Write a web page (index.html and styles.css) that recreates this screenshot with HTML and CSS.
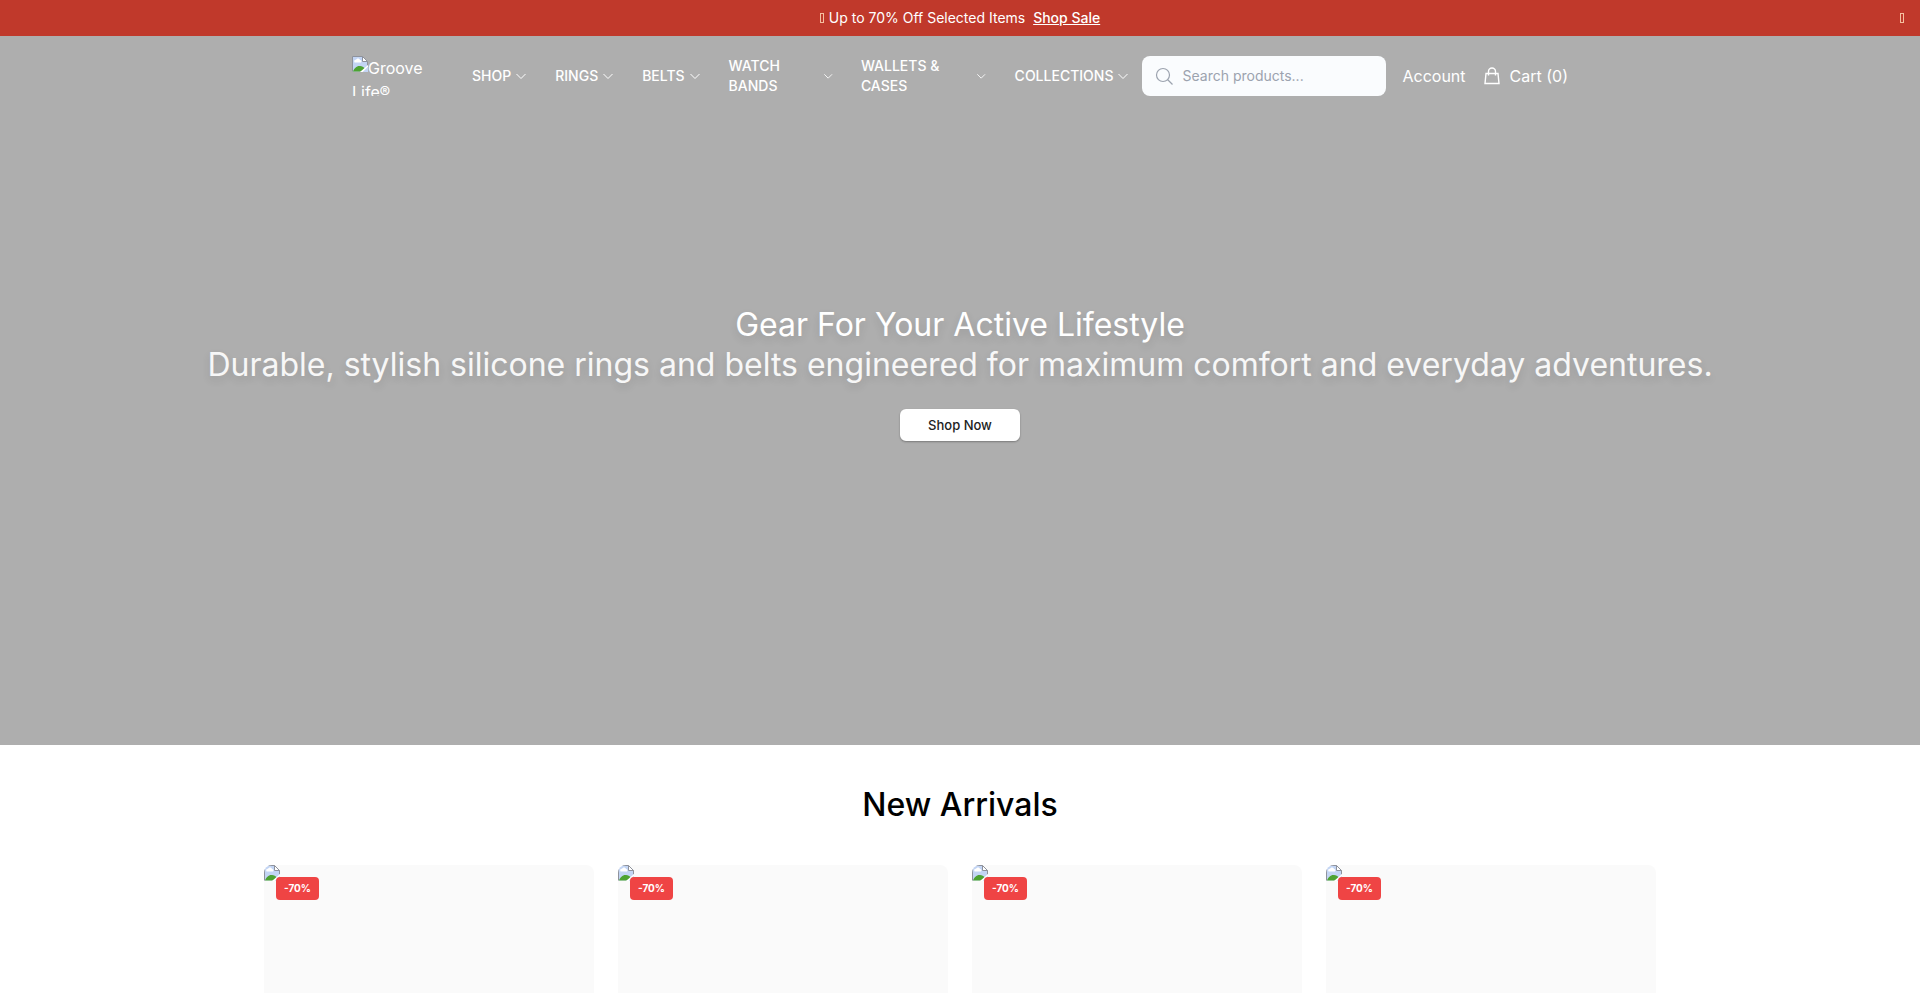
FILE: index.html
```html
<!DOCTYPE html>
<html lang="en">
<head>
    <meta charset="UTF-8">
    <meta name="viewport" content="width=device-width, initial-scale=1.0">
    <title>Groove Life®</title>
    <link rel="stylesheet" href="styles.css">
</head>
<body>
    <!-- Shared icons -->
    <svg class="sprite" aria-hidden="true">
        <symbol id="chevron" viewBox="0 0 24 24">
            <path d="M3 8l9 9 9-9" fill="none" stroke="currentColor" stroke-width="2"/>
        </symbol>
        <symbol id="picture" viewBox="0 0 16 16">
            <path d="M.5 .5h10l5 5v10H.5z" fill="#c3d5f4"/>
            <path d="M2.500 6.500c-1-2 .5-3 1.500-2.500.5-2 3.500-2 4 0 1.500 0 2 1.500 1 2.500z" fill="#fff"/>
            <path d="M1 15.500c1-3 4-6 7-5.500 2 0 3.500 1 5 2.500l-4 3z" fill="#4da332"/>
            <path d="M.5 15.500V.5h10l5 5v4" fill="none" stroke="#8e929c"/>
            <path d="M10.500 .5v5h5z" fill="#fff" stroke="#8e929c"/>
            <path d="M8 16l8-7v2l-5 5z" fill="#fff"/>
            <path d="M11 16l5-5v5z" fill="#c3d5f4"/>
        </symbol>
    </svg>

    <!-- Sale banner -->
    <div class="banner">
        <p class="banner-text"><span class="glyph"></span>Up to 70% Off Selected Items <a href="#">Shop Sale</a></p>
        <button type="button" class="banner-close" aria-label="Close"><span class="glyph"></span></button>
    </div>

    <!-- Hero -->
    <div class="hero">
        <header class="header">
            <a href="#" class="logo"><svg class="picture"><use href="#picture"/></svg>Groove Life®</a>
            <nav class="nav">
                <button type="button" class="nav-item"><span>SHOP</span><svg><use href="#chevron"/></svg></button>
                <button type="button" class="nav-item"><span>RINGS</span><svg><use href="#chevron"/></svg></button>
                <button type="button" class="nav-item"><span>BELTS</span><svg><use href="#chevron"/></svg></button>
                <button type="button" class="nav-item"><span>WATCH BANDS</span><svg><use href="#chevron"/></svg></button>
                <button type="button" class="nav-item"><span>WALLETS &amp; CASES</span><svg><use href="#chevron"/></svg></button>
                <button type="button" class="nav-item"><span>COLLECTIONS</span><svg><use href="#chevron"/></svg></button>
            </nav>
            <label class="search">
                <svg viewBox="0 0 20 20" fill="none" stroke="currentColor" stroke-width="1.200"><circle cx="9" cy="9" r="6.500"/><path d="M13.500 13.500l5 5"/></svg>
                <input type="text" placeholder="Search products..." aria-label="Search products">
            </label>
            <a href="#" class="account">Account</a>
            <a href="#" class="cart">
                <svg viewBox="0 0 20 20" fill="none" stroke="currentColor" stroke-width="1.400"><path d="M4 7.500h12l1 10H3z"/><path d="M6.500 9.500V5.500a3.500 3.500 0 0 1 7 0v4"/></svg>
                <span>Cart (0)</span>
            </a>
        </header>

        <div class="hero-content">
            <h1>Gear For Your Active Lifestyle</h1>
            <p>Durable, stylish silicone rings and belts engineered for maximum comfort and everyday adventures.</p>
            <button type="button" class="shop-now">Shop Now</button>
        </div>
    </div>

    <!-- New arrivals -->
    <section class="arrivals">
        <h2>New Arrivals</h2>
        <div class="products">
            <div class="product"><svg class="picture"><use href="#picture"/></svg><span class="discount">-70%</span></div>
            <div class="product"><svg class="picture"><use href="#picture"/></svg><span class="discount">-70%</span></div>
            <div class="product"><svg class="picture"><use href="#picture"/></svg><span class="discount">-70%</span></div>
            <div class="product"><svg class="picture"><use href="#picture"/></svg><span class="discount">-70%</span></div>
        </div>
    </section>
</body>
</html>
```
FILE: styles.css
```css
* {
    box-sizing: border-box;
}
html {
    scrollbar-width: none;
}
body {
    margin: 0;
    font-family: Inter, sans-serif;
    font-size: 16px;
    line-height: 24px;
    color: #000;
    background-color: #fff;
}
h1, h2, p {
    margin: 0;
}
a {
    color: inherit;
    text-decoration: none;
}
button {
    padding: 0;
    border: none;
    background: none;
    color: inherit;
    font-family: inherit;
    cursor: pointer;
}
.sprite {
    display: none;
}
.picture {
    width: 16px;
    height: 16px;
}

/* Sale banner */
.banner {
    position: relative;
    height: 36px;
    background-color: #c0392b;
    color: #fff;
    text-align: center;
}
.banner-text {
    font-size: 14px;
    line-height: 36px;
}
.banner-text a {
    margin-left: 4px;
    font-weight: 500;
    text-decoration: underline;
}
.glyph {
    display: inline-block;
    width: 4px;
    height: 10px;
    border: 1px solid #f5c0a0;
}
.banner-text .glyph {
    margin-right: 5px;
}
.banner-close {
    position: absolute;
    top: 0;
    right: 16px;
    height: 36px;
}

/* Header */
.hero {
    display: flex;
    flex-direction: column;
    background-color: #aeaeae;
    color: #fff;
}
.header {
    display: flex;
    align-items: center;
    width: 100%;
    max-width: 1280px;
    height: 80px;
    margin: 0 auto;
    padding: 0 32px;
}
.logo {
    flex: none;
    width: 80px;
    height: 40px;
    margin-right: 40px;
    overflow: hidden;
}
.logo .picture {
    vertical-align: top;
}
.nav {
    display: flex;
    flex: 1;
    gap: 28px;
    min-width: 0;
    margin-right: 13px;
}
.nav-item {
    display: flex;
    align-items: center;
    gap: 4px;
    font-size: 14px;
    font-weight: 500;
    line-height: 20px;
    text-align: left;
}
.nav-item svg {
    width: 12px;
    height: 12px;
}
.search {
    display: flex;
    align-items: center;
    gap: 8px;
    flex: none;
    width: 244px;
    height: 40px;
    margin-right: 16px;
    padding: 0 12px;
    border-radius: 8px;
    background-color: #fafcfe;
    color: #9ca3af;
}
.search svg {
    flex: none;
    width: 20px;
    height: 20px;
}
.search input {
    width: 100%;
    padding: 0;
    border: none;
    outline: none;
    background: none;
    font-family: inherit;
    font-size: 14px;
    line-height: 20px;
}
.search input::placeholder {
    color: #9ca3af;
}
.account {
    margin-right: 16px;
}
.cart {
    display: flex;
    align-items: center;
    gap: 8px;
    white-space: nowrap;
}
.cart svg {
    width: 20px;
    height: 20px;
}

/* Hero content */
.hero-content {
    display: flex;
    flex-direction: column;
    align-items: center;
    justify-content: center;
    min-height: 629px;
    padding: 0 32px 116px;
    text-align: center;
}
.hero-content h1,
.hero-content p {
    font-size: 32px;
    font-weight: 400;
    line-height: 40px;
    text-shadow: 0 4px 8px rgba(0, 0, 0, 0.12);
}
.hero-content p {
    color: #f7f7f7;
}
.shop-now {
    width: 120px;
    height: 32px;
    margin-top: 24px;
    border-radius: 6px;
    background-color: #fff;
    box-shadow: 0 1px 2px rgba(0, 0, 0, 0.3);
    color: #222;
    font-size: 13px;
    font-weight: 500;
}

/* New arrivals */
.arrivals {
    max-width: 1440px;
    margin: 0 auto;
    padding: 40px 24px;
}
.arrivals h2 {
    margin-bottom: 40px;
    font-size: 32px;
    font-weight: 500;
    line-height: 40px;
    text-align: center;
}
.products {
    display: grid;
    grid-template-columns: repeat(4, 1fr);
    gap: 24px;
}
.product {
    position: relative;
    aspect-ratio: 1;
    border-radius: 8px;
    overflow: hidden;
    background-color: #fafafa;
}
.product .picture {
    display: block;
}
.discount {
    position: absolute;
    top: 12px;
    left: 12px;
    padding: 4px 8px;
    border-radius: 4px;
    background-color: #ef4444;
    color: #fff;
    font-size: 10px;
    font-weight: 700;
    line-height: 15px;
}
```
